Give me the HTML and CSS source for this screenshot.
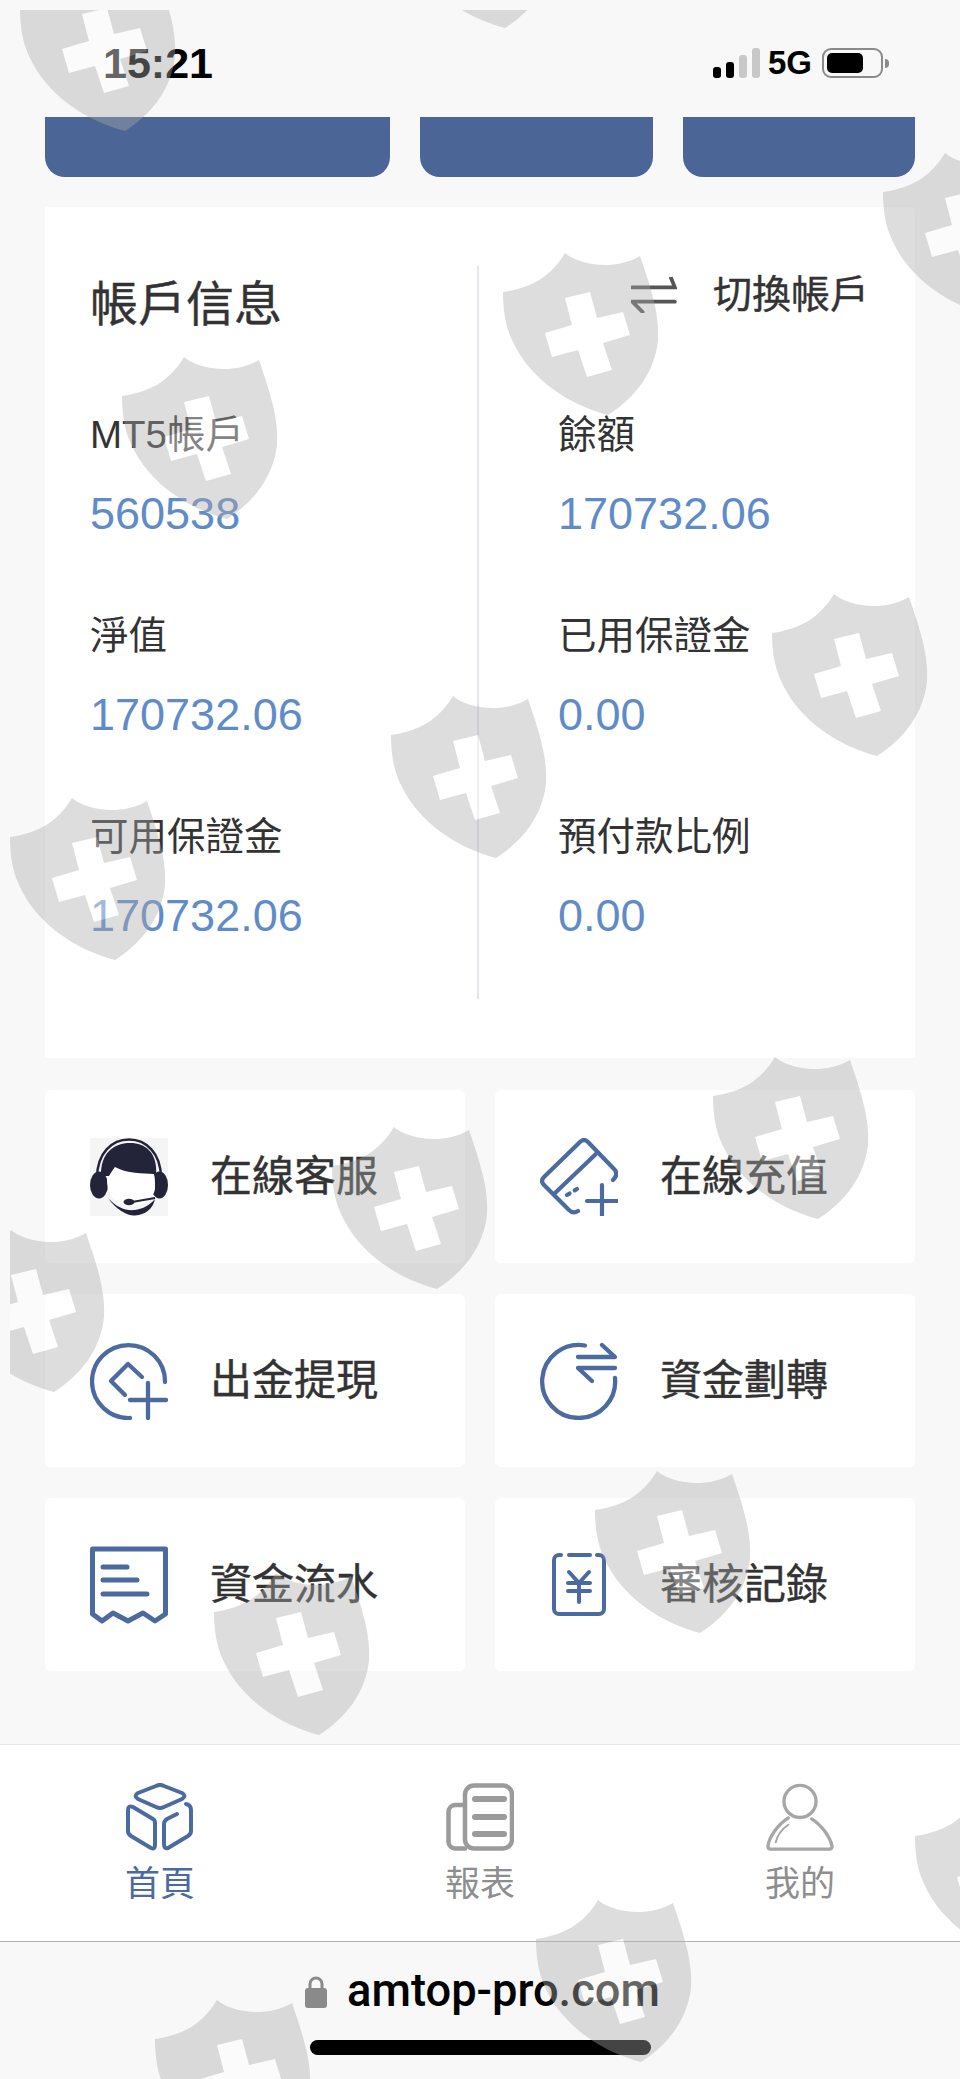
FILE: index.html
```html
<!DOCTYPE html>
<html lang="zh-Hant">
<head>
<meta charset="utf-8">
<title>帳戶信息</title>
<link rel="stylesheet" href="styles.css">
</head>
<body>
<div class="page">
  <header class="status">
    <div class="time">15:21</div>
    <div class="status-right">
      <div class="signal"><i class="b1"></i><i class="b2"></i><i class="b3"></i><i class="b4"></i></div>
      <div class="net">5G</div>
      <div class="battery"><div class="level"></div></div>
      <div class="nub"></div>
    </div>
  </header>

  <div class="bars"><div class="bar"></div><div class="bar"></div><div class="bar"></div></div>

  <section class="info">
    <div class="col col-left">
      <div class="head"><h1 class="title">帳戶信息</h1></div>
      <div class="stat"><div class="label">MT5帳戶</div><div class="value">560538</div></div>
      <div class="stat"><div class="label">淨值</div><div class="value">170732.06</div></div>
      <div class="stat"><div class="label">可用保證金</div><div class="value">170732.06</div></div>
    </div>
    <div class="col col-right">
      <div class="head head-swap">
        <svg class="swap-icon" viewBox="0 0 48 38" fill="none" stroke="#555" stroke-width="4" stroke-linecap="round"><path d="M1 11H46L42 1"/><path d="M46 26H1L12 37"/></svg>
        <span class="swap-text">切換帳戶</span>
      </div>
      <div class="stat"><div class="label">餘額</div><div class="value">170732.06</div></div>
      <div class="stat"><div class="label">已用保證金</div><div class="value">0.00</div></div>
      <div class="stat"><div class="label">預付款比例</div><div class="value">0.00</div></div>
    </div>
  </section>

  <section class="actions">
    <div class="action">
      <div class="slot">
        <svg class="ico ico-head" viewBox="0 0 78 78">
          <path d="M7 40C7 15 22 1.500 39 1.500C56 1.500 71 15 71 40" fill="none" stroke="#23233a" stroke-width="2.500"/>
          <path d="M11 38C10 15 24 5 40 5C56 5 68 15 66 38Z" fill="#23233a"/>
          <ellipse cx="9" cy="47" rx="9" ry="13.500" fill="#23233a"/>
          <ellipse cx="69.500" cy="47" rx="8.500" ry="13.500" fill="#23233a"/>
          <path d="M17 42C19 37 22 33 25 29C38 36 52 35 64 36C65 40 65 44 65 50C65 59 53 68 41 68C27 68 17 58 17 42Z" fill="#fff"/>
          <path d="M18 60C26 72 38 78 45 77.500C55 77 63 71 65 61C59 68 52 71 45 72C35 73 26 69 18 60Z" fill="#23233a"/>
          <ellipse cx="39" cy="64" rx="5.500" ry="3.200" fill="#23233a"/>
          <path d="M42 64L65 60" stroke="#23233a" stroke-width="2"/>
        </svg>
      </div>
      <span class="action-text">在線客服</span>
    </div>
    <div class="action">
      <div class="slot">
        <svg class="ico" viewBox="0 0 78 78" fill="none" stroke="#4b6ba0" stroke-width="4.200" stroke-linecap="round" stroke-linejoin="round">
          <path d="M73 42Q79 36 74 31L48 4Q44 0 40 4L4 39Q0 43 4 47L29 72Q33 76 38 73"/>
          <path d="M15 55L57 15"/><path d="M27 57L37 51" stroke-dasharray="3 6"/>
          <path d="M47 63H77M62 47V77"/>
        </svg>
      </div>
      <span class="action-text">在線充值</span>
    </div>
    <div class="action">
      <div class="slot">
        <svg class="ico" viewBox="0 0 78 78" fill="none" stroke="#4b6ba0" stroke-width="4.300" stroke-linecap="round" stroke-linejoin="round">
          <path d="M40 76A36.500 36.500 0 1 1 75 40"/>
          <path d="M52 35L38 22L21 39L35 53"/>
          <path d="M40 58H76M58 41V76"/>
        </svg>
      </div>
      <span class="action-text">出金提現</span>
    </div>
    <div class="action">
      <div class="slot">
        <svg class="ico" viewBox="0 0 78 78" fill="none" stroke="#4b6ba0" stroke-width="4.300" stroke-linecap="round" stroke-linejoin="round">
          <path d="M45 3.500A36.500 36.500 0 1 0 75 36"/>
          <path d="M38 15H75L62 3"/>
          <path d="M75 26H38L52 39"/>
        </svg>
      </div>
      <span class="action-text">資金劃轉</span>
    </div>
    <div class="action">
      <div class="slot">
        <svg class="ico" viewBox="0 0 78 78" fill="none" stroke="#4b6ba0" stroke-width="5" stroke-linecap="round" stroke-linejoin="round">
          <path d="M2.500 3H75.500V68L65 75L53 67L38 75L23 67L12 75L2.500 68Z"/>
          <path d="M13 21H37M13 34H47M13 48H57"/>
        </svg>
      </div>
      <span class="action-text">資金流水</span>
    </div>
    <div class="action">
      <div class="slot">
        <svg class="ico-yen" viewBox="0 0 54 63" fill="none" stroke="#4b6ba0" stroke-width="4" stroke-linecap="round" stroke-linejoin="round">
          <path d="M9 2H7A5 5 0 0 0 2 7V56A5 5 0 0 0 7 61H47A5 5 0 0 0 52 56V7A5 5 0 0 0 47 2H45"/>
          <path d="M17 2H38"/>
          <path d="M17 19L27 30L37 19M16 30H38M16 38H38M27 30V49"/>
        </svg>
      </div>
      <span class="action-text">審核記錄</span>
    </div>
  </section>

  <nav class="tabs">
    <div class="tab tab-on">
      <svg class="tab-ico" viewBox="0 0 68 68" fill="none" stroke="#4b6ba0" stroke-width="4" stroke-linecap="round" stroke-linejoin="round">
        <path d="M30 3Q34 1 38 3L56 10Q61 13 56 16L38 24Q34 26 30 24L12 16Q7 13 12 10Z"/>
        <path d="M7 24L27 36Q29 37 29 40V62Q29 67 25 65L5 53Q2 51 2 48V27Q2 22 7 24Z"/>
        <path d="M60 21Q65 22 65 27V48Q65 51 62 53L42 65Q38 66 38 61"/>
        <path d="M38 60V41Q38 38 41 36L51 31"/>
      </svg>
      <span class="tab-text">首頁</span>
    </div>
    <div class="tab">
      <svg class="tab-ico" viewBox="0 0 68 68" fill="none" stroke="#9b9b9b" stroke-width="4.500" stroke-linecap="round" stroke-linejoin="round">
        <rect x="19" y="2.500" width="47" height="63" rx="9"/>
        <path d="M18 22H9A7 7 0 0 0 2.500 29V59A7 7 0 0 0 9 65.500H19"/>
        <path d="M29 16H58M29 34H58M29 51H58" stroke-width="6"/>
      </svg>
      <span class="tab-text">報表</span>
    </div>
    <div class="tab">
      <svg class="tab-ico" viewBox="0 0 70 68" fill="none" stroke="#a6a6a6" stroke-width="3.400" stroke-linecap="round" stroke-linejoin="round">
        <ellipse cx="35" cy="18" rx="16.500" ry="16.500"/>
        <path d="M23 35C12 42 3 55 2 64Q2 67 5 67H65Q68 67 68 64C66 55 58 43 47 36"/>
        <path d="M10 60C12 52 17 46 23 42" stroke-width="2"/>
      </svg>
      <span class="tab-text">我的</span>
    </div>
  </nav>

  <footer class="safari">
    <div class="url">
      <svg class="lock" viewBox="0 0 22 33"><path d="M5 14V9A6 6 0 0 1 17 9V14" fill="none" stroke="#8a8a8a" stroke-width="3"/><rect y="13" width="22" height="20" rx="3" fill="#8a8a8a"/></svg>
      <span class="url-text">amtop-pro.com</span>
    </div>
    <div class="home"></div>
  </footer>

  <svg class="marks" viewBox="10 10 950 2069" aria-hidden="true">
    <defs>
      <g id="shield">
        <path fill="#aaa" d="M75 13C88 24 122 32 150 16C160 45 170 75 168 100C165 132 145 158 118 175C80 165 40 140 22 100C15 85 13 68 13 52C40 48 60 38 75 13Z"/>
        <path fill="#fff" d="M75 58L100 52L107 78L133 72L140 95L113 103L122 130L97 137L88 110L62 117L55 93L82 85Z"/>
      </g>
    </defs>
    <g opacity="0.4">
      <use href="#shield" x="7" y="-44"/>
      <use href="#shield" x="387" y="-147"/>
      <use href="#shield" x="490" y="240"/>
      <use href="#shield" x="870" y="140"/>
      <use href="#shield" x="109" y="344"/>
      <use href="#shield" x="759" y="581"/>
      <use href="#shield" x="378" y="683"/>
      <use href="#shield" x="-3" y="785"/>
      <use href="#shield" x="319" y="1114"/>
      <use href="#shield" x="-64" y="1217"/>
      <use href="#shield" x="700" y="1044"/>
      <use href="#shield" x="582" y="1458"/>
      <use href="#shield" x="201" y="1560"/>
      <use href="#shield" x="523" y="1887"/>
      <use href="#shield" x="142" y="1987"/>
      <use href="#shield" x="902" y="1784"/>
    </g>
  </svg>
</div>
</body>
</html>
```
FILE: styles.css
```css
* { box-sizing: border-box; }
html, body { margin: 0; padding: 0; }
body {
  background: #f8f8f8;
  font-family: "Liberation Sans", "Noto Sans CJK TC", sans-serif;
  color: #333;
}
.page {
  position: relative;
  width: 960px;
  height: 2079px;
  overflow: hidden;
  display: flex;
  flex-direction: column;
}

/* status bar */
.status {
  height: 117px;
  flex: none;
  padding: 47px 71px 0 103px;
  display: flex;
  justify-content: space-between;
  align-items: flex-start;
}
.time {
  font-size: 43px;
  line-height: 32px;
  font-weight: 700;
  color: #000;
}
.status-right { display: flex; align-items: flex-start; }
.signal { display: flex; align-items: flex-end; gap: 5px; height: 30px; margin-top: 1px; }
.signal i { display: block; width: 8px; border-radius: 3px; background: #000; }
.signal .b1 { height: 11px; }
.signal .b2 { height: 16px; }
.signal .b3 { height: 23px; background: #c8c8c8; }
.signal .b4 { height: 30px; background: #c8c8c8; }
.net {
  font-size: 33px;
  line-height: 32px;
  font-weight: 700;
  color: #000;
  margin-left: 8px;
  margin-right: 10px;
}
.battery {
  width: 61px;
  height: 30px;
  margin-top: 1px;
  padding: 3px;
  border: 2px solid #8a8a8a;
  border-radius: 9px;
}
.level { width: 36px; height: 20px; border-radius: 5px; background: #000; }
.nub { width: 4px; height: 9px; margin: 12px 0 0 2px; background: #8a8a8a; border-radius: 0 4px 4px 0; }

/* cut-off buttons */
.bars {
  flex: none;
  display: grid;
  grid-template-columns: 345px 233px 232px;
  gap: 30px;
  margin: 0 45px;
}
.bar { height: 60px; background: #4b6596; border-radius: 0 0 20px 20px; }

/* account card */
.info {
  flex: none;
  display: flex;
  margin: 30px 45px 0;
  height: 851px;
  padding: 59px 0;
  background: #fff;
  border-radius: 2px;
}
.col-left { width: 434px; padding-left: 45px; border-right: 2px solid #e3e6ef; }
.col-right { flex: 1; padding-left: 79px; }
.head { height: 60px; margin-top: 9px; margin-bottom: 72px; display: flex; align-items: center; }
.title { margin: 0; font-size: 48px; line-height: 50px; font-weight: 400; -webkit-text-stroke: 0.4px #333; color: #333; }
.head-swap { justify-content: flex-end; padding: 0 46px 20px 0; gap: 36px; }
.swap-icon { width: 46px; height: 36px; flex: none; }
.swap-text { font-size: 39px; line-height: 44px; font-weight: 400; -webkit-text-stroke: 0.4px #333; color: #333; }
.stat { height: 201px; padding-top: 3px; }
.label { font-size: 38.500px; line-height: 50px; color: #333; }
.value { margin-top: 29px; font-size: 45px; line-height: 50px; color: #5f8cc8; }

/* action grid */
.actions {
  flex: none;
  display: grid;
  grid-template-columns: 420px 420px;
  grid-auto-rows: 173px;
  gap: 31px 30px;
  margin: 32px 45px 0;
}
.action {
  display: flex;
  align-items: center;
  padding-left: 45px;
  gap: 42px;
  background: #fff;
  border-radius: 6px;
}
.slot { width: 78px; height: 78px; flex: none; display: flex; align-items: center; justify-content: center; }
.ico { width: 78px; height: 78px; display: block; }
.ico-head { background: #f5f5f5; }
.ico-yen { width: 54px; height: 63px; display: block; }
.action-text { font-size: 42px; line-height: 50px; font-weight: 400; -webkit-text-stroke: 0.4px #333; color: #333; }

/* tab bar */
.tabs {
  flex: none;
  margin-top: auto;
  height: 198px;
  padding-top: 38px;
  display: grid;
  grid-template-columns: repeat(3, 1fr);
  background: #fff;
  border-top: 1px solid #e8e8e8;
  border-bottom: 1px solid #b4b4b4;
}
.tab { display: flex; flex-direction: column; align-items: center; gap: 13px; }
.tab-ico { height: 68px; width: 68px; display: block; }
.tab-text { font-size: 35px; line-height: 40px; font-weight: 400; color: #8e8e8e; }
.tab-on .tab-text { color: #4b6ba0; }

/* browser bar */
.safari {
  flex: none;
  height: 137px;
  padding-top: 27px;
  display: flex;
  flex-direction: column;
  align-items: center;
}
.url { height: 44px; display: flex; align-items: center; gap: 20px; margin-left: 5px; }
.lock { width: 22px; height: 33px; display: block; flex: none; }
.url-text { font-family: Roboto, "Liberation Sans", sans-serif; font-size: 45.300px; line-height: 44px; font-weight: 500; color: #000; }
.home { width: 341px; height: 15px; margin-top: 27px; background: #000; border-radius: 8px; }

/* watermark overlay */
.marks {
  position: absolute;
  top: 10px;
  left: 10px;
  width: 950px;
  height: 2069px;
  pointer-events: none;
}
```
